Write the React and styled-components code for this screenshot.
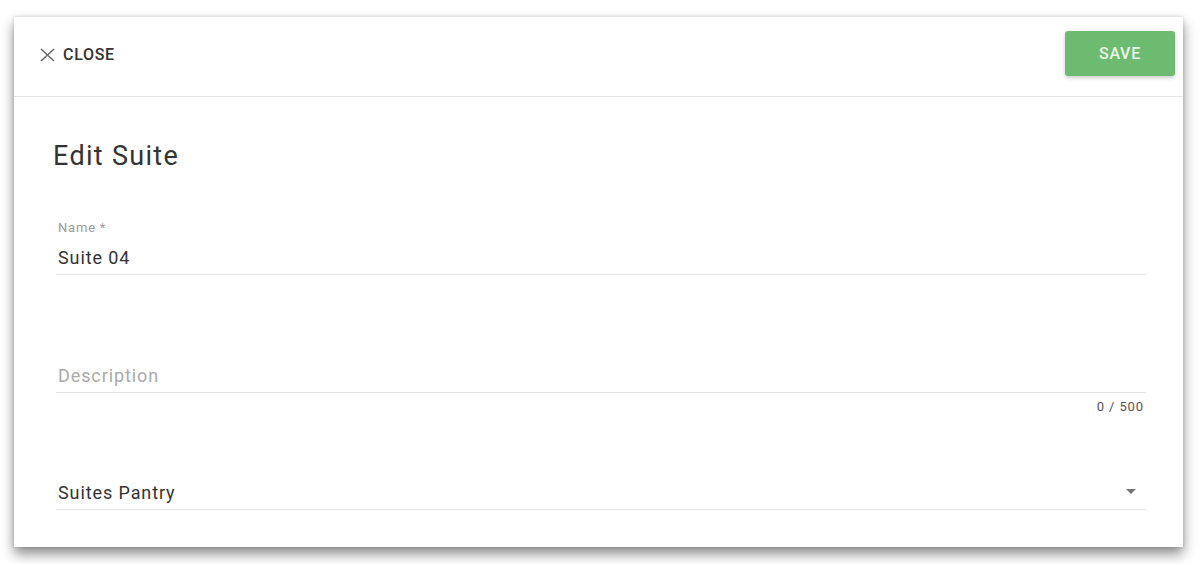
import styled, { createGlobalStyle } from "styled-components";

const GlobalStyle = createGlobalStyle`
  html, body {
    margin: 0;
    padding: 0;
    background: #fff;
  }
  body {
    font-family: Roboto, "Liberation Sans", Arial, sans-serif;
    color: #333;
  }
`;

const App = () => {
  return (
    <>
      <GlobalStyle />
      <Page>
        <Card>
          <Header>
            <CloseBtn>
              <CloseIcon viewBox="0 0 15 14">
                <path d="M1 1 L14 13 M14 1 L1 13" stroke="#6b6b6b" strokeWidth="1.6" fill="none" />
              </CloseIcon>
              CLOSE
            </CloseBtn>
            <SaveBtn>SAVE</SaveBtn>
          </Header>

          <Body>
            <Title>Edit Suite</Title>

            <Field>
              <Label>Name *</Label>
              <Value>Suite 04</Value>
            </Field>

            <Field $top={89}>
              <Value $placeholder>Description</Value>
            </Field>
            <Counter>0 / 500</Counter>

            <Field $top={66}>
              <SelectRow>
                <Value>Suites Pantry</Value>
                <Arrow />
              </SelectRow>
            </Field>
          </Body>
        </Card>
      </Page>
    </>
  );
};

const Page = styled.div`
  padding: 17px 0 17px 14px;
  min-height: 564px;
  box-sizing: border-box;
`;

const Card = styled.div`
  width: 1169px;
  height: 530px;
  background: #fff;
  box-shadow: 0 7px 12px rgba(0, 0, 0, 0.45), 0 0 4px rgba(0, 0, 0, 0.14);
  box-sizing: border-box;
`;

const Header = styled.div`
  display: flex;
  align-items: center;
  justify-content: space-between;
  height: 80px;
  padding: 0 8px 0 26px;
  border-bottom: 1px solid #e6e6e6;
  box-sizing: border-box;
`;

const CloseBtn = styled.div`
  display: flex;
  align-items: center;
  gap: 8px;
  font-size: 16px;
  font-weight: 500;
  letter-spacing: 0.7px;
  color: #333;
  margin-top: -4px;
`;

const CloseIcon = styled.svg`
  width: 15px;
  height: 14px;
`;

const SaveBtn = styled.div`
  display: flex;
  align-items: center;
  justify-content: center;
  width: 110px;
  height: 45px;
  margin-top: -6px;
  background: #6dbb70;
  border-radius: 3px;
  box-shadow: 0 2px 4px rgba(0, 0, 0, 0.2);
  color: #e9f6e9;
  font-size: 16px;
  font-weight: 500;
  letter-spacing: 0.7px;
`;

const Body = styled.div`
  padding: 43px 37px 0 42px;
`;

const Title = styled.h1`
  margin: 0 0 0 -3px;
  font-size: 27px;
  line-height: 32px;
  font-weight: 400;
  letter-spacing: 1.3px;
  color: #333;
`;

const Field = styled.div`
  margin-top: ${(p) => p.$top ?? 48}px;
  border-bottom: 1px solid #e3e3e3;
  padding-bottom: 4px;
`;

const Label = styled.div`
  font-size: 13px;
  line-height: 16px;
  letter-spacing: 0.8px;
  color: #9a9a9a;
  padding-left: 2px;
  margin-bottom: 10px;
`;

const Value = styled.div`
  font-size: 18px;
  line-height: 24px;
  letter-spacing: 0.9px;
  padding-left: 2px;
  color: ${(p) => (p.$placeholder ? "#aaaaaa" : "#333")};
`;

const Counter = styled.div`
  text-align: right;
  font-size: 13px;
  line-height: 16px;
  letter-spacing: 0.9px;
  color: #555;
  padding-right: 2px;
  margin-top: 6px;
`;

const SelectRow = styled.div`
  display: flex;
  align-items: center;
  justify-content: space-between;
`;

const Arrow = styled.div`
  width: 0;
  height: 0;
  margin: -4px 10px 0 0;
  border-left: 5px solid transparent;
  border-right: 5px solid transparent;
  border-top: 5px solid #757575;
`;

export default App;
